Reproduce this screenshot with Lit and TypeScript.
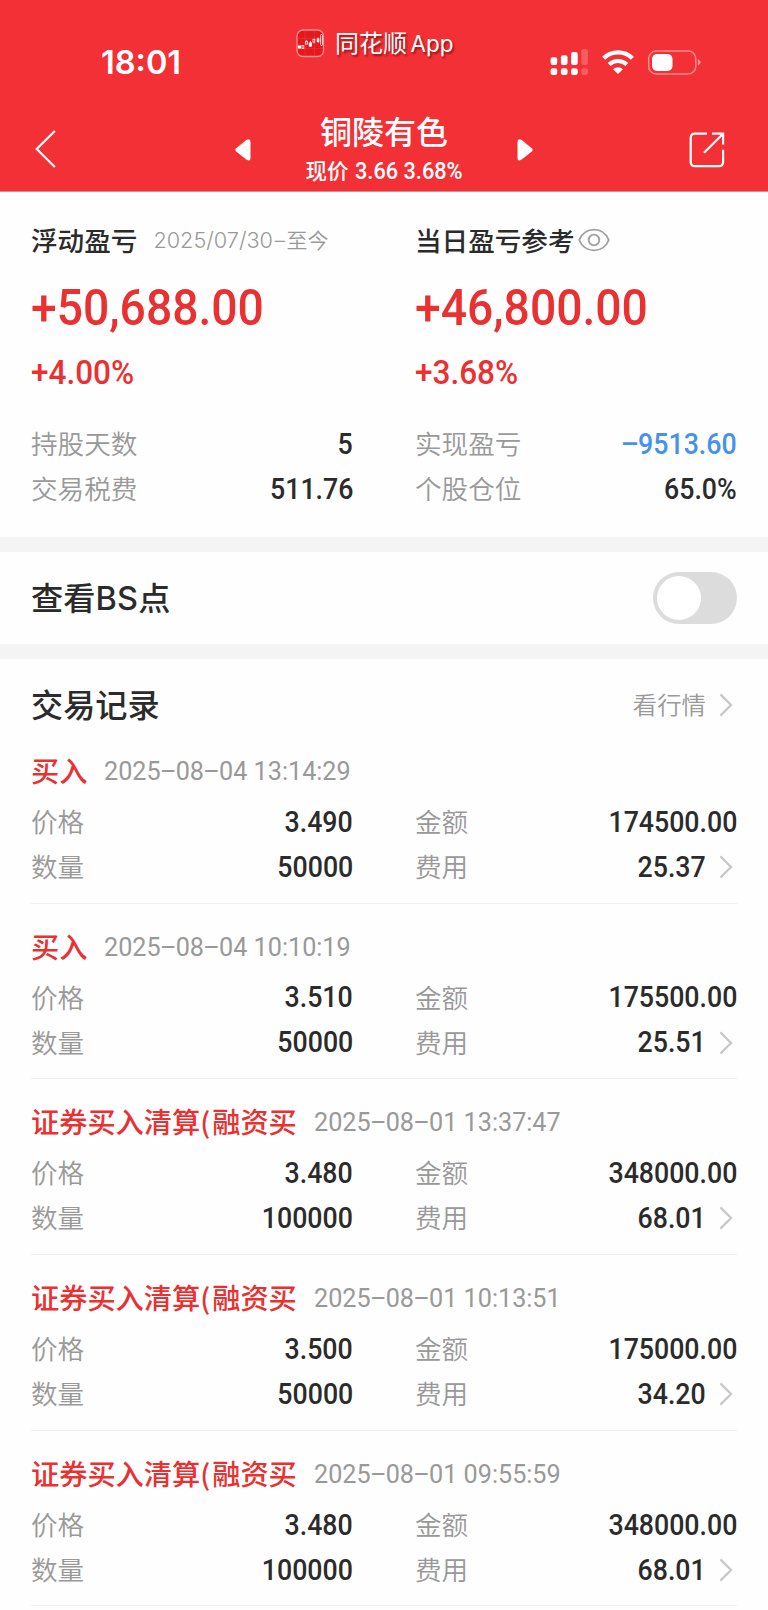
import { LitElement, html, css } from "lit";
import { customElement, property, state } from "lit/decorators.js";

interface Trade {
  kind: string;
  time: string;
  price: string;
  amount: string;
  quantity: string;
  fee: string;
}

const TRADES: Trade[] = [
  { kind: "买入", time: "2025-08-04 13:14:29", price: "3.490", amount: "174500.00", quantity: "50000", fee: "25.37" },
  { kind: "买入", time: "2025-08-04 10:10:19", price: "3.510", amount: "175500.00", quantity: "50000", fee: "25.51" },
  { kind: "证券买入清算(融资买", time: "2025-08-01 13:37:47", price: "3.480", amount: "348000.00", quantity: "100000", fee: "68.01" },
  { kind: "证券买入清算(融资买", time: "2025-08-01 10:13:51", price: "3.500", amount: "175000.00", quantity: "50000", fee: "34.20" },
  { kind: "证券买入清算(融资买", time: "2025-08-01 09:55:59", price: "3.480", amount: "348000.00", quantity: "100000", fee: "68.01" },
];

// Hyphens are drawn wide, at digit mid-height.
const withDashes = (text: string) =>
  text.split(/(-)/).map((part) => (part === "-" ? html`<span class="dash">-</span>` : part));

const dashStyles = css`
  .dash {
    display: inline-block;
    width: 0.6em;
    text-align: center;
    transform: translateY(-0.02em) scaleX(2.05);
  }
`;

const chevron = html`<svg width="14" height="24" viewBox="0 0 14 24">
  <path d="M1.400 1.400 L12 12 L1.400 22.600" fill="none" stroke="#c8c8c8" stroke-width="2.300" />
</svg>`;

@customElement("label-value")
export class LabelValue extends LitElement {
  @property() label = "";
  @property() value = "";
  @property() tone = "dark";
  @property({ type: Boolean }) link = false;

  static styles = [
    dashStyles,
    css`
      :host {
        display: flex;
        align-items: center;
        justify-content: space-between;
        height: 45px;
      }
      .label {
        padding-bottom: 4px;
        font-size: 26.6px;
        font-weight: 350;
        color: #999;
      }
      .end {
        display: flex;
        align-items: center;
        gap: 13px;
      }
      .value {
        padding-bottom: 1.5px;
        font-family: Roboto, "Noto Sans CJK SC", sans-serif;
        font-size: 29.3px;
        font-weight: 500;
        color: #2b2b2b;
        transform: scaleX(0.912);
        transform-origin: right center;
      }
      .blue {
        color: #4691ee;
      }
      svg {
        display: block;
        margin: 0 4px 1px 0;
      }
    `,
  ];

  render() {
    return html`
      <span class="label">${this.label}</span>
      <span class="end">
        <span class="value ${this.tone}">${withDashes(this.value)}</span>
        ${this.link ? chevron : null}
      </span>
    `;
  }
}

@customElement("status-bar")
export class StatusBar extends LitElement {
  static styles = css`
    :host {
      display: grid;
      grid-template-columns: 296px 1fr 220px;
      height: 96px;
      color: #fff;
    }
    .time {
      padding: 43px 0 0 101px;
      font: 600 32.5px/40px Inter, sans-serif;
    }
    .app {
      display: flex;
      align-items: center;
      gap: 10px;
      height: 28px;
      padding-top: 29px;
      font-size: 24px;
      white-space: nowrap;
      text-shadow: 1.5px 2px 2px rgba(90, 0, 0, 0.6);
    }
    .app > span {
      padding-bottom: 3px;
    }
    .latin {
      margin-left: -2px;
      font-family: Inter, sans-serif;
      font-size: 22.5px;
    }
    svg {
      display: block;
    }
    .icons {
      padding-top: 46px;
    }
  `;

  render() {
    return html`
      <div class="time">18:01</div>
      <div class="app">
        <svg width="29" height="29" viewBox="0 0 29 29">
          <rect x="1" y="1" width="26.500" height="26.500" rx="6" fill="#e5191d" stroke="#fa8f91" stroke-width="1.300" />
          <path d="M1.500 9.500H27M1.500 19.500H27M9 1.500V27M18.500 1.500V27" stroke="#ef4447" stroke-width=".4" />
          <g fill="#fff">
            <rect x="1.800" y="16.500" width="3.200" height="3" />
            <rect x="12.800" y="13.500" width="3.200" height="4" />
            <rect x="20.800" y="9.500" width="2.500" height="3.500" />
          </g>
          <g fill="none" stroke="#fff" stroke-width=".8">
            <path d="M10.500 11v1.500M18 9.500v1m0 3v1M14.500 12v6M22.200 8.500v5.500" />
            <rect x="6" y="16.500" width="1.800" height="3" />
            <rect x="9.500" y="12.500" width="2" height="2.600" />
            <rect x="17" y="10.500" width="1.800" height="2.600" />
            <rect x="24.600" y="5.500" width="1.800" height="11" rx=".8" />
          </g>
        </svg>
        <span>同花顺 <span class="latin">App</span></span>
      </div>
      <svg class="icons" width="160" height="32" viewBox="548 46 160 32">
        <g fill="#fff">
          <rect x="550.600" y="57.300" width="6.600" height="7.700" rx="2" />
          <rect x="560.900" y="55.300" width="6.600" height="9.700" rx="2" />
          <rect x="571.100" y="52" width="6.600" height="13" rx="2" />
          <rect x="550.600" y="68.300" width="6.600" height="6.700" rx="2" />
          <rect x="560.900" y="68.300" width="6.600" height="6.700" rx="2" />
          <rect x="571.100" y="68.300" width="6.600" height="6.700" rx="2" />
          <g opacity=".22">
            <rect x="581.300" y="49" width="6.600" height="16" rx="2" />
            <rect x="581.300" y="68.300" width="6.600" height="6.700" rx="2" />
          </g>
          <path d="M618 74 L613 69.200 Q618 65.400 623 69.200 Z" />
          <path d="M697.800 59 Q700.600 60.200 700.600 62.200 Q700.600 64.200 697.800 65.500 Z" opacity=".5" />
          <rect x="652" y="54" width="20.500" height="17" rx="5" />
        </g>
        <g fill="none" stroke="#fff" stroke-width="4.200">
          <path d="M603.600 58.300 A20.700 20.700 0 0 1 632.400 58.300" />
          <path d="M609.200 64.600 A12.600 12.600 0 0 1 626.800 64.600" />
        </g>
        <rect x="648.700" y="51" width="47" height="23" rx="7.500" fill="none" stroke="#fff" stroke-opacity=".45" stroke-width="1.500" />
      </svg>
    `;
  }
}

@customElement("trade-record")
export class TradeRecord extends LitElement {
  @property({ attribute: false }) trade!: Trade;

  static styles = [
    dashStyles,
    css`
      :host {
        display: block;
        box-sizing: border-box;
        height: 175.7px;
        padding-top: 22.5px;
        border-bottom: 1px solid #f0f0f0;
      }
      .head {
        display: flex;
        align-items: center;
        gap: 17px;
        height: 42px;
        margin-bottom: 7.5px;
        white-space: nowrap;
      }
      .kind {
        padding-bottom: 4px;
        font-size: 28.2px;
        font-weight: 500;
        color: #ea3131;
      }
      .paren {
        margin-right: 2px;
      }
      .time {
        padding-bottom: 1px;
        font-family: Roboto, sans-serif;
        font-size: 26.7px;
        color: #999;
        transform: scaleX(0.943);
        transform-origin: left center;
      }
      .cells {
        display: grid;
        grid-template-columns: 1fr 1fr;
        column-gap: 62px;
      }
    `,
  ];

  render() {
    const t = this.trade;
    return html`
      <div class="head">
        <span class="kind">${t.kind.split(/(\()/).map((part) => (part === "(" ? html`<span class="paren">(</span>` : part))}</span>
        <span class="time">${withDashes(t.time)}</span>
      </div>
      <div class="cells">
        <label-value label="价格" value=${t.price}></label-value>
        <label-value label="金额" value=${t.amount}></label-value>
        <label-value label="数量" value=${t.quantity}></label-value>
        <label-value label="费用" value=${t.fee} link></label-value>
      </div>
    `;
  }
}

@customElement("app-root")
export class AppRoot extends LitElement {
  @state() private showPoints = false;

  static styles = css`
    :host {
      display: block;
      width: 768px;
      height: 1610px;
      overflow: hidden;
      background: #fefefe;
      color: #2b2b2b;
      font-family: "Noto Sans CJK SC", sans-serif;
    }
    svg {
      display: block;
    }
    header {
      height: 191px;
      background: #f23035;
      color: #fff;
      border-bottom: 1px solid #d98a8b;
    }
    .nav {
      display: grid;
      grid-template-columns: 235px 298px 1fr;
      align-items: start;
    }
    .back {
      margin: 34px 0 0 35px;
    }
    .switcher {
      display: flex;
      justify-content: space-between;
    }
    .arrow {
      margin-top: 42px;
    }
    .title {
      display: flex;
      flex-direction: column;
      align-items: center;
      white-space: nowrap;
    }
    .name {
      padding-top: 13px;
      font-size: 32px;
      font-weight: 500;
      line-height: 42px;
    }
    .quote {
      display: flex;
      align-items: center;
      gap: 6px;
      padding-top: 1px;
      font-size: 21.5px;
      font-weight: 500;
      line-height: 34px;
    }
    .quote-num {
      width: 108px;
      padding-top: 2px;
      font-family: Roboto, sans-serif;
      font-size: 23.5px;
      transform: scaleX(0.925);
      transform-origin: left center;
    }
    .share {
      margin: 35px 0 0 156px;
    }
    .pair {
      display: grid;
      grid-template-columns: 1fr 1fr;
      column-gap: 62px;
      padding: 0 31px;
    }
    .summary {
      height: 345px;
      align-content: start;
    }
    .caption {
      display: flex;
      align-items: center;
      height: 40px;
      margin: 27px 0 18px;
      font-size: 26.6px;
      font-weight: 500;
      white-space: nowrap;
    }
    .period {
      display: flex;
      align-items: center;
      margin-left: 16px;
      font-size: 21px;
      font-weight: 350;
      color: #999;
    }
    .period-num {
      padding-top: 2px;
      font-family: Inter, sans-serif;
      font-size: 21.7px;
      font-weight: 300;
    }
    .period-dash {
      width: 13.5px;
      padding-top: 2px;
      text-align: center;
      transform: scaleX(1.6);
      font-family: Inter, sans-serif;
      font-weight: 300;
    }
    .eye {
      margin: 2px 0 0 3px;
    }
    .gain {
      font-family: Roboto, sans-serif;
      font-weight: 500;
      color: #ea3131;
      transform-origin: left center;
    }
    .big {
      font-size: 50px;
      line-height: 62px;
      transform: scaleX(0.925);
    }
    .pct {
      margin-top: 9px;
      margin-bottom: 24px;
      font-size: 33px;
      line-height: 50px;
      transform: scaleX(0.955);
    }
    .band {
      height: 15px;
      background: #f4f4f4;
    }
    .row {
      display: flex;
      align-items: center;
      justify-content: space-between;
      height: 92px;
      padding: 0 31px;
      font-size: 32.2px;
      font-weight: 500;
    }
    .row-title {
      padding-bottom: 4px;
    }
    .bs {
      font-family: Inter, sans-serif;
      font-size: 32.5px;
      letter-spacing: 0.2px;
    }
    .toggle {
      box-sizing: border-box;
      width: 84px;
      height: 52px;
      padding: 4px;
      border: 0;
      border-radius: 26px;
      background: #dcdcdc;
    }
    .thumb {
      display: block;
      width: 44px;
      height: 44px;
      border-radius: 50%;
      background: #fff;
    }
    .on .thumb {
      margin-left: auto;
    }
    .list-head {
      height: 47px;
      padding-top: 22px;
    }
    .more {
      display: flex;
      align-items: center;
      gap: 13px;
      padding-right: 4px;
      font-size: 24.4px;
      font-weight: 350;
      color: #999;
    }
    .more span {
      padding-bottom: 2px;
    }
    .records {
      padding: 0 31px;
    }
  `;

  render() {
    return html`
      <header>
        <status-bar></status-bar>
        <div class="nav">
          <svg class="back" width="21" height="38" viewBox="0 0 21 38">
            <path d="M19.800 1 L1.700 19 L19.800 37" fill="none" stroke="#fff" stroke-width="2.200" />
          </svg>
          <div class="switcher">
            <svg class="arrow" width="16" height="24" viewBox="0 0 16 24">
              <path d="M1.200 10.200 L11.600 1.800 Q15.500 0 15.500 4 V20 Q15.500 24 11.600 21.800 L1.200 13.600 Q-.5 12 1.200 10.200 Z" fill="#fff" />
            </svg>
            <div class="title">
              <div class="name">铜陵有色</div>
              <div class="quote"><span>现价</span><span class="quote-num">3.66 3.68%</span></div>
            </div>
            <svg class="arrow" width="16" height="24" viewBox="0 0 16 24">
              <path d="M14.800 10.200 L4.400 1.800 Q.5 0 .5 4 V20 Q.5 24 4.400 21.800 L14.800 13.600 Q16.500 12 14.800 10.200 Z" fill="#fff" />
            </svg>
          </div>
          <svg class="share" width="38" height="38" viewBox="689 131 38 38">
            <g fill="none" stroke="#fff" stroke-width="2.200">
              <path d="M707 133.600 H695 Q690.700 133.600 690.700 138 V162 Q690.700 166.200 695 166.200 H718.800 Q723.100 166.200 723.100 162 V149.800" />
              <path d="M712 133.600 H723.100 V144.500 M722.600 134.200 L704 152.800" />
            </g>
          </svg>
        </div>
      </header>

      <section class="pair summary">
        <div>
          <div class="caption">
            浮动盈亏
            <span class="period">
              <span class="period-num">2025/07/30</span><span class="period-dash">-</span><span>至今</span>
            </span>
          </div>
          <div class="gain big">+50,688.00</div>
          <div class="gain pct">+4.00%</div>
          <label-value label="持股天数" value="5"></label-value>
          <label-value label="交易税费" value="511.76"></label-value>
        </div>
        <div>
          <div class="caption">
            当日盈亏参考
            <svg class="eye" width="32" height="24" viewBox="0 0 32 24">
              <g fill="none" stroke="#a0a0a0" stroke-width="1.800">
                <path d="M1.200 12 C7 -1.800 25 -1.800 30.800 12 C25 25.800 7 25.800 1.200 12 Z" />
                <circle cx="16" cy="12" r="5.300" />
              </g>
            </svg>
          </div>
          <div class="gain big">+46,800.00</div>
          <div class="gain pct">+3.68%</div>
          <label-value label="实现盈亏" value="-9513.60" tone="blue"></label-value>
          <label-value label="个股仓位" value="65.0%"></label-value>
        </div>
      </section>

      <div class="band"></div>
      <section class="row">
        <span class="row-title">查看<span class="bs">BS</span>点</span>
        <button
          class="toggle ${this.showPoints ? "on" : ""}"
          role="switch"
          aria-checked=${this.showPoints}
          @click=${() => (this.showPoints = !this.showPoints)}
        >
          <span class="thumb"></span>
        </button>
      </section>
      <div class="band"></div>

      <section class="row list-head">
        <span class="row-title">交易记录</span>
        <div class="more"><span>看行情</span>${chevron}</div>
      </section>
      <section class="records">
        ${TRADES.map((trade) => html`<trade-record .trade=${trade}></trade-record>`)}
      </section>
    `;
  }
}
